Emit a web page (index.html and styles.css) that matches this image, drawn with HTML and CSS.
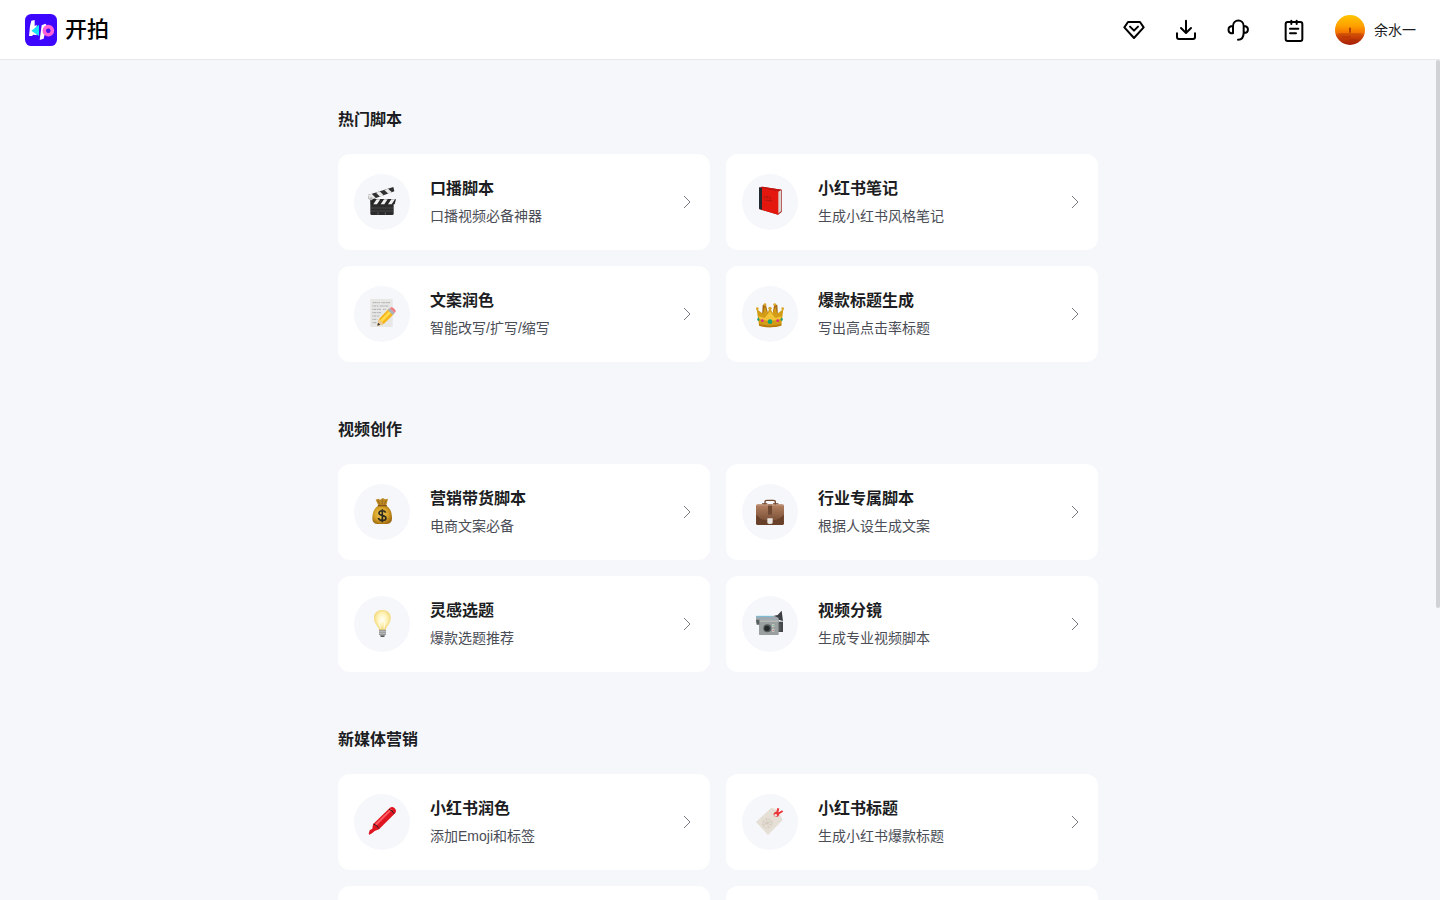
FILE: index.html
```html
<!DOCTYPE html>
<html lang="zh-CN">
<head>
<meta charset="utf-8">
<meta name="viewport" content="width=device-width, initial-scale=1">
<title>开拍</title>
<link rel="stylesheet" href="styles.css">
</head>
<body>
<header class="topbar">
  <a class="brand" href="#">
    <svg class="brand-mark" viewBox="45 42 96 96" aria-hidden="true">
      <rect x="45" y="42" width="96" height="96" rx="19" fill="#3d06ff"/>
      <path d="M64 62 74 60V78L80 74V106L70 104 66 108H57L60 78Z" fill="#fff"/>
      <path d="M95 76 106 71 110 76 101 116 89 120Z" fill="#fff"/>
      <path d="M87 74V108L64 92Z" fill="#19e3f5"/>
      <circle cx="115" cy="92" r="12" fill="none" stroke="#ff62d8" stroke-width="11"/>
      <circle cx="115" cy="92" r="6" fill="#4a10f2"/>
    </svg>
    <span class="brand-name">开拍</span>
  </a>
  <nav class="tools" aria-label="工具">
    <button class="tool" type="button" aria-label="会员">
      <svg class="tool-icon" viewBox="36 54 72 72"><path d="M54 66H90L101 82 72 114 43 82Z"/><path d="M60 80 72 92 84 80"/></svg>
    </button>
    <button class="tool" type="button" aria-label="下载">
      <svg class="tool-icon" viewBox="192 54 72 72"><path d="M228 62V98M213 84 228 99 243 84M201 100V111Q201 117 207 117H249Q255 117 255 111V100"/></svg>
    </button>
    <button class="tool" type="button" aria-label="客服">
      <svg class="tool-icon" viewBox="348 54 72 72"><path d="M369 100V78C369 56 401 56 401 78V98C401 112 394 119 384 119M369 78C351 78 351 100 369 100M401 78C418 78 418 99 401 99"/></svg>
    </button>
    <button class="tool tool-notes" type="button" aria-label="笔记">
      <svg class="tool-icon" viewBox="516 54 72 72"><rect x="527" y="66" width="50" height="57" rx="6"/><path d="M544 62V72M560 62V72M540 86H565M540 100H558"/></svg>
    </button>
  </nav>
  <button class="account" type="button">
    <svg class="avatar" viewBox="0 0 90 90" aria-hidden="true">
      <defs>
        <linearGradient id="sunset" x1="0" y1="0" x2="0" y2="1"><stop offset="0" stop-color="#ffc400"/><stop offset=".35" stop-color="#ffa200"/><stop offset=".58" stop-color="#f57600"/><stop offset=".68" stop-color="#d04a06"/><stop offset="1" stop-color="#a51c08"/></linearGradient>
      </defs>
      <circle cx="45" cy="45" r="45" fill="url(#sunset)"/>
      <path d="M43 40 45 37 47 40V53H43Z" fill="#8e2a08"/>
      <path d="M12 57H78M20 66H48M44 75H68" stroke="#8f2109" stroke-width="2" opacity=".6"/>
    </svg>
    <span>余水一</span>
  </button>
</header>

<div class="viewport">
  <main class="scroll">
    <div class="content">
      <section class="group">
        <h2 class="group-title">热门脚本</h2>
        <div class="cards">
          <a class="card" href="#">
            <span class="badge"><svg class="emoji" viewBox="42 42 84 84" aria-hidden="true">
              <rect x="49" y="75" width="70" height="48" rx="4" fill="#2b2b2b"/>
              <path d="M50 76H126L122 91H50Z" fill="#262626"/>
              <path d="M58 91 68 76H79L69 91ZM80 91 90 76H101L91 91ZM102 91 112 76H123L113 91Z" fill="#eee"/>
              <path d="M42 63 118 39 121 52 50 78 44 74Z" fill="#303030"/>
              <path d="M42 63 53 59 65 71 50 78 44 74ZM66 56 77 52 89 64 78 68ZM91 48 102 44 114 55 103 59Z" fill="#e9e9e9"/>
              <path d="M51 102H118M51 111H118" stroke="#666" stroke-width="1.5"/>
              <path d="M72 116V121M94 116V121" stroke="#999" stroke-width="2"/>
              <circle cx="51" cy="74" r="5" fill="#bbb"/>
            </svg></span>
            <span class="text"><strong class="name">口播脚本</strong><span class="desc">口播视频必备神器</span></span>
            <svg class="arrow" viewBox="0 0 16 16" aria-hidden="true"><path d="M5 2 11 8 5 14"/></svg>
          </a>
          <a class="card" href="#">
            <span class="badge"><svg class="emoji" viewBox="42 42 84 84" aria-hidden="true">
              <path d="M52 41 60 38 119 47V114L108 122 52 106Z" fill="#9b1714"/>
              <path d="M108 53 117 48V112L108 119Z" fill="#d9d4ce"/>
              <path d="M59 41 109 52V122L59 107Z" fill="#e3170e"/>
              <path d="M51 40 60 42V107L51 104Z" fill="#202a30"/>
              <path d="M56 39 62 38 119 47 109 52 60 42Z" fill="#c8120d"/>
              <path d="M68 65V73M73 66 76 72 78 66M83 67V74H88M69 78 91 81" fill="none" stroke="#941512" stroke-width="2"/>
            </svg></span>
            <span class="text"><strong class="name">小红书笔记</strong><span class="desc">生成小红书风格笔记</span></span>
            <svg class="arrow" viewBox="0 0 16 16" aria-hidden="true"><path d="M5 2 11 8 5 14"/></svg>
          </a>
          <a class="card" href="#">
            <span class="badge"><svg class="emoji" viewBox="42 42 84 84" aria-hidden="true">
              <path d="M49 39H116V123H49Z" fill="#e7e7e5"/>
              <path d="M56 50H78M82 50H108M55 60H73M77 60H105M55 70H82M87 70H96M55 80H82M55 90H76M55 100H70M55 110H67" stroke="#a0a1a3" stroke-width="2.5" stroke-dasharray="4 1 7 2"/>
              <path d="M70 119 75 99 104 68 120 84 89 114Z" fill="#f6b51c"/>
              <path d="M79 103 108 72 114 78 84 109Z" fill="#ffdc4b"/>
              <path d="M70 119 75 99 89 114Z" fill="#edc994"/>
              <path d="M70 119 72 110 79 116Z" fill="#333"/>
              <path d="M101 72 107 66 122 81 116 87Z" fill="#aab1b8"/>
              <path d="M107 66 112 64Q117 63 121 69 126 73 125 77L122 81Z" fill="#ee7c83"/>
            </svg></span>
            <span class="text"><strong class="name">文案润色</strong><span class="desc">智能改写/扩写/缩写</span></span>
            <svg class="arrow" viewBox="0 0 16 16" aria-hidden="true"><path d="M5 2 11 8 5 14"/></svg>
          </a>
          <a class="card" href="#">
            <span class="badge"><svg class="emoji" viewBox="42 42 84 84" aria-hidden="true">
              <path d="M62 57 71 53 79 86H91L97 54 106 57 108 90H60Z" fill="#a96b16"/>
              <path d="M44 69 63 83 69 61 76 82 84 65 92 82 100 62 106 83 124 69 118 118Q84 130 51 118Z" fill="#d39c16"/>
              <path d="M50 91 68 96 84 76 100 96 118 91 116 99Q84 109 52 99Z" fill="#f3c437"/>
              <path d="M51 113Q84 124 118 113V119Q84 129 51 119Z" fill="#b87c0e"/>
              <g fill="#d9a526"><circle cx="46" cy="68" r="4"/><circle cx="69" cy="56" r="4"/><circle cx="84" cy="67" r="5"/><circle cx="98" cy="56" r="4"/><circle cx="122" cy="68" r="4"/></g>
              <circle cx="84" cy="107" r="7" fill="#16a173"/><circle cx="61" cy="104" r="4" fill="#dd278e"/><circle cx="107" cy="104" r="4" fill="#dd278e"/>
              <ellipse cx="49" cy="100" rx="3" ry="5" fill="#16a173"/><ellipse cx="119" cy="100" rx="3" ry="5" fill="#16a173"/>
            </svg></span>
            <span class="text"><strong class="name">爆款标题生成</strong><span class="desc">写出高点击率标题</span></span>
            <svg class="arrow" viewBox="0 0 16 16" aria-hidden="true"><path d="M5 2 11 8 5 14"/></svg>
          </a>
        </div>
      </section>

      <section class="group">
        <h2 class="group-title">视频创作</h2>
        <div class="cards">
          <a class="card" href="#">
            <span class="badge"><svg class="emoji" viewBox="42 42 84 84" aria-hidden="true">
              <defs><radialGradient id="gold" cx=".45" cy=".45" r=".6"><stop offset="0" stop-color="#f3cf58"/><stop offset=".6" stop-color="#d5a126"/><stop offset="1" stop-color="#9d6811"/></radialGradient></defs>
              <path d="M65 47 73 44 78 47 87 42 93 46 102 44 97 64H73Z" fill="#bd8a25"/>
              <path d="M72 49 78 62M85 47V61M96 49 91 62" stroke="#8a5b15" stroke-width="2"/>
              <path d="M73 65H96C108 71 114 84 114 103Q114 119 99 120H69Q55 119 55 103C55 84 62 71 73 65Z" fill="url(#gold)"/>
              <path d="M73 65H97" stroke="#835317" stroke-width="4" stroke-linecap="round"/>
              <path d="M95 86C92 78 75 78 75 88 75 97 96 92 96 102 96 112 76 112 73 102M85 76V115" fill="none" stroke="#2f2b20" stroke-width="5"/>
            </svg></span>
            <span class="text"><strong class="name">营销带货脚本</strong><span class="desc">电商文案必备</span></span>
            <svg class="arrow" viewBox="0 0 16 16" aria-hidden="true"><path d="M5 2 11 8 5 14"/></svg>
          </a>
          <a class="card" href="#">
            <span class="badge"><svg class="emoji" viewBox="42 42 84 84" aria-hidden="true">
              <defs><linearGradient id="leather" x1="0" y1="0" x2="0" y2="1"><stop offset="0" stop-color="#b58263"/><stop offset="1" stop-color="#6b432b"/></linearGradient></defs>
              <path d="M69 63V54Q69 49 75 49H94Q100 49 100 54V63" fill="none" stroke="#71472e" stroke-width="4"/>
              <rect x="42" y="61" width="84" height="62" rx="5" fill="url(#leather)"/>
              <path d="M43 92C55 106 65 109 76 109H93C105 108 115 103 125 92V118Q125 123 120 123H48Q43 123 43 118Z" fill="#69402a"/>
              <path d="M78 62H90V92H78Z" fill="#6f4932"/>
              <path d="M44 64H124" stroke="#c2987b" stroke-width="2"/>
              <path d="M76 103H92V116Q92 120 84 120T76 116Z" fill="#e9e5e1"/>
              <path d="M60 59H76M93 59H109" stroke="#765039" stroke-width="3"/>
            </svg></span>
            <span class="text"><strong class="name">行业专属脚本</strong><span class="desc">根据人设生成文案</span></span>
            <svg class="arrow" viewBox="0 0 16 16" aria-hidden="true"><path d="M5 2 11 8 5 14"/></svg>
          </a>
          <a class="card" href="#">
            <span class="badge"><svg class="emoji" viewBox="42 42 84 84" aria-hidden="true">
              <defs><radialGradient id="glow" cx=".5" cy=".45" r=".58"><stop offset="0" stop-color="#fffef3"/><stop offset=".5" stop-color="#fff3b8"/><stop offset="1" stop-color="#efce65"/></radialGradient></defs>
              <path d="M75 103C75 91 60 86 60 66 60 50 71 42 85 42 99 42 110 50 110 66 110 86 95 91 95 103Z" fill="url(#glow)"/>
              <path d="M79 99 75 74 83 78 89 74 93 78 90 99" fill="none" stroke="#fff" stroke-width="2"/>
              <path d="M75 101H96V115L90 122H81L75 115Z" fill="#999b9d"/>
              <path d="M75 106H96M75 112H96" stroke="#c8c8c6" stroke-width="2"/><path d="M80 119H91V123H80Z" fill="#535557"/>
            </svg></span>
            <span class="text"><strong class="name">灵感选题</strong><span class="desc">爆款选题推荐</span></span>
            <svg class="arrow" viewBox="0 0 16 16" aria-hidden="true"><path d="M5 2 11 8 5 14"/></svg>
          </a>
          <a class="card" href="#">
            <span class="badge"><svg class="emoji" viewBox="42 42 84 84" aria-hidden="true">
              <path d="M93 60 107 57 119 44 123 75 109 71H97Z" fill="#3b3f42"/>
              <path d="M106 77H123V108H106Z" fill="#45484a"/>
              <path d="M42 60H98L110 66V80H42Z" fill="#9fa9af"/>
              <path d="M43 61H92" stroke="#78bedc" stroke-width="3"/>
              <rect x="51" y="72" width="59" height="45" rx="2" fill="#9a9f9f"/>
              <path d="M53 73H108V78H53Z" fill="#b3b8b7"/>
              <path d="M42 71H52V86H44Z" fill="#5b6061"/>
              <circle cx="76" cy="97" r="12" fill="#555b5c"/><circle cx="75" cy="97" r="8" fill="#242829"/>
              <path d="M90 85H97V93H90ZM90 98H97V107H90Z" fill="#d4d8d4"/><path d="M92 87H95V91H92Z" fill="#43a26c"/><path d="M92 101H95V105H92Z" fill="#bf5144"/>
              <path d="M114 83V106" stroke="#6d7172" stroke-width="2"/>
            </svg></span>
            <span class="text"><strong class="name">视频分镜</strong><span class="desc">生成专业视频脚本</span></span>
            <svg class="arrow" viewBox="0 0 16 16" aria-hidden="true"><path d="M5 2 11 8 5 14"/></svg>
          </a>
        </div>
      </section>

      <section class="group">
        <h2 class="group-title">新媒体营销</h2>
        <div class="cards">
          <a class="card" href="#">
            <span class="badge"><svg class="emoji" viewBox="42 42 84 84" aria-hidden="true">
              <path d="M44 119 47 109 55 104 57 91 107 42Q115 36 122 43 129 50 124 57L75 106 62 111 54 118 46 122Z" fill="#df1621"/>
              <path d="M62 91 110 44 115 47 67 95Z" fill="#ff5961"/>
              <path d="M59 90Q70 94 75 104M105 46Q116 49 120 59" fill="none" stroke="#282224" stroke-width="3"/>
            </svg></span>
            <span class="text"><strong class="name">小红书润色</strong><span class="desc">添加Emoji和标签</span></span>
            <svg class="arrow" viewBox="0 0 16 16" aria-hidden="true"><path d="M5 2 11 8 5 14"/></svg>
          </a>
          <a class="card" href="#">
            <span class="badge"><svg class="emoji" viewBox="42 42 84 84" aria-hidden="true">
              <path d="M42 84 88 41 108 48 122 78 78 123Z" fill="#e5dfd5"/>
              <path d="M62 81 90 94M65 98 85 76M60 92 91 83M73 73 80 102" stroke="#cfc7bb" stroke-width="2"/>
              <circle cx="76" cy="88" r="14" fill="none" stroke="#d3cbc0" stroke-width="3" stroke-dasharray="3 2"/>
              <circle cx="103" cy="61" r="8" fill="#e83b3d"/><circle cx="101" cy="64" r="4" fill="#eadfdb"/>
              <path d="M105 58 109 43M107 60 122 51" stroke="#ef3036" stroke-width="6"/>
            </svg></span>
            <span class="text"><strong class="name">小红书标题</strong><span class="desc">生成小红书爆款标题</span></span>
            <svg class="arrow" viewBox="0 0 16 16" aria-hidden="true"><path d="M5 2 11 8 5 14"/></svg>
          </a>
          <div class="card"></div>
          <div class="card"></div>
        </div>
      </section>
    </div>
  </main>
  <div class="rail" aria-hidden="true"><div class="thumb"></div></div>
</div>
</body>
</html>
```
FILE: styles.css
```css
* {
  box-sizing: border-box;
}

body {
  margin: 0;
  height: 100vh;
  display: flex;
  flex-direction: column;
  background: #f5f7fb;
  color: #1c1d22;
  font-family: "Liberation Sans", "Noto Sans CJK SC", sans-serif;
  font-size: 14px;
}

button {
  padding: 0;
  border: 0;
  background: none;
  color: inherit;
  font: inherit;
  cursor: pointer;
}

a {
  color: inherit;
  text-decoration: none;
}

.topbar {
  flex: none;
  height: 60px;
  padding: 0 24px;
  display: flex;
  align-items: center;
  background: #fff;
  border-bottom: 1px solid #e6e8ec;
}

.brand {
  display: flex;
  align-items: center;
  gap: 8px;
  margin-right: auto;
  padding-left: 1px;
}

.brand-mark {
  width: 32px;
  height: 32px;
}

.brand-name {
  font-size: 22px;
  line-height: 32px;
  font-weight: 500;
  color: #000;
}

.tools {
  display: flex;
  gap: 28px;
}

.tool,
.tool-icon {
  display: block;
  width: 24px;
  height: 24px;
}

.tool-notes {
  margin-left: 4px;
}

.tool-icon {
  fill: none;
  stroke: #000;
  stroke-width: 6;
  stroke-linecap: round;
  stroke-linejoin: round;
}

.account {
  display: flex;
  align-items: center;
  gap: 9px;
  margin-left: 29px;
  line-height: 22px;
}

.avatar {
  width: 30px;
  height: 30px;
}

.viewport {
  flex: 1;
  min-height: 0;
  display: flex;
}

.scroll {
  flex: 1;
  overflow-y: auto;
  scrollbar-width: none;
}

.content {
  max-width: 760px;
  margin: 0 auto;
  padding: 48px 0;
}

.group {
  margin-bottom: 56px;
}

.group-title {
  margin: 0 0 22px;
  font-size: 16px;
  line-height: 24px;
  font-weight: 600;
}

.cards {
  display: grid;
  grid-template-columns: 1fr 1fr;
  gap: 16px;
}

.card {
  min-height: 96px;
  padding: 16px 15px 16px 16px;
  display: flex;
  align-items: center;
  background: #fff;
  border-radius: 12px;
}

.badge {
  flex: none;
  width: 56px;
  height: 56px;
  margin-right: 20px;
  display: grid;
  place-items: center;
  background: #f5f7fb;
  border-radius: 50%;
}

.emoji {
  width: 28px;
  height: 28px;
  overflow: visible;
}

.text {
  flex: 1;
  display: flex;
  flex-direction: column;
  gap: 4px;
}

.name {
  font-size: 16px;
  line-height: 24px;
  font-weight: 600;
}

.desc {
  line-height: 22px;
  color: #4a4d56;
}

.arrow {
  width: 16px;
  height: 16px;
  fill: none;
  stroke: #777b84;
  stroke-width: 1;
}

.rail {
  width: 4px;
}

.thumb {
  height: 65.2%;
  background: #d0d2d6;
  border-radius: 2px;
}
```
